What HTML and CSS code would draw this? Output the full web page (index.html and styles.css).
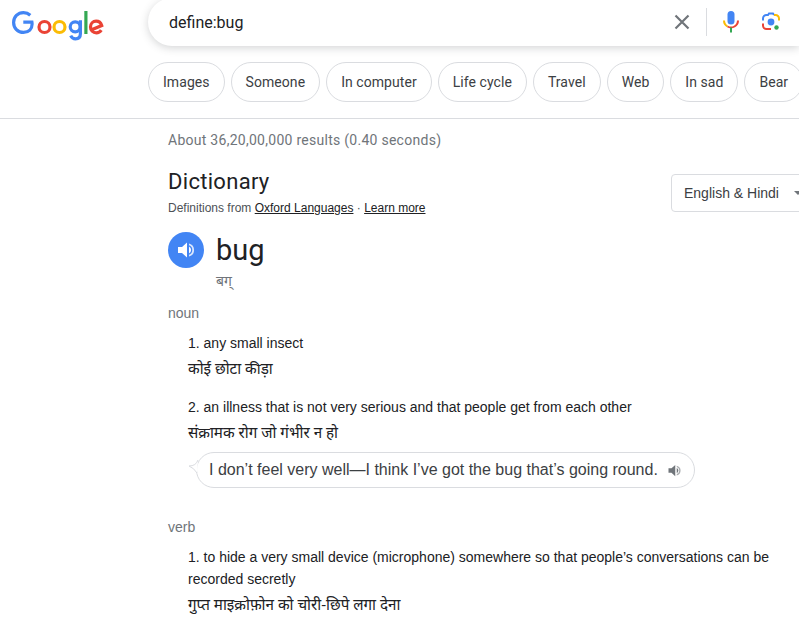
FILE: index.html
```html
<!DOCTYPE html>
<html lang="en">
<head>
<meta charset="utf-8">
<title>define:bug - Google Search</title>
<link rel="stylesheet" href="styles.css">
</head>
<body>
<header class="top">
  <div class="search-row">
    <svg class="logo" viewBox="0 0 92 30" width="92" height="30" role="img" aria-label="Google" fill="none" stroke-width="3.200">
      <path d="M18.300 5.300A10.300 10.300 0 0 0 11.500 2.600C5.800 2.600 1.600 7 1.600 12.500S5.800 22.400 11.500 22.400C16.800 22.400 20.100 18.900 20.100 14 20.100 13.300 20 12.700 19.900 12.100H11.300" stroke="#4285f4"/>
      <circle cx="32.500" cy="17" r="5.500" stroke="#ea4335"/>
      <circle cx="47.500" cy="17" r="5.500" stroke="#fbbc05"/>
      <circle cx="63.200" cy="16.800" r="5" stroke="#4285f4"/>
      <path d="M68.400 10.200v13.600c0 3.400-2.100 5-4.900 5-2.300 0-4-1.400-4.800-3.200" stroke="#4285f4"/>
      <path d="M73.900 1v23" stroke="#34a853"/>
      <path d="M78.500 20.300 89.700 15.500C88.900 13 87 11.200 84.100 11.200c-3.100 0-5.600 2.500-5.600 5.800 0 3.500 2.500 5.800 5.800 5.800 2.400 0 4-1.200 5-2.700" stroke="#ea4335"/>
    </svg>
    <div class="search-box">
      <span class="query">define:bug</span>
      <div class="search-icons">
        <svg class="clear" viewBox="0 0 16 16" width="16" height="16" fill="none" stroke="#70757a" stroke-width="2.200"><path d="M1.500 1.500l13 13M14.500 1.500l-13 13"/></svg>
        <span class="sep"></span>
        <svg class="mic" viewBox="0 0 16 24" width="16" height="24" fill="none">
          <rect x="4.500" y="1" width="7" height="13.500" rx="3.500" fill="#4285f4"/>
          <path d="M1 10.500a7 7 0 0 0 3.500 6" stroke="#fbbc05" stroke-width="2"/>
          <path d="M4.500 16.500a7 7 0 0 0 7 0 7 7 0 0 0 3.500-6" stroke="#ea4335" stroke-width="2"/>
          <path d="M8 17.500v5" stroke="#34a853" stroke-width="2"/>
        </svg>
        <svg class="lens" viewBox="0 0 20 20" width="20" height="20" fill="none" stroke-width="2">
          <path d="M2 8.500v-2A3.500 3.500 0 0 1 5.500 3H7l1-1.500h4L13 3" stroke="#4285f4"/>
          <path d="M13 3h1.500A3.500 3.500 0 0 1 18 6.500v2" stroke="#fbbc05"/>
          <path d="M2 11.500v2A3.500 3.500 0 0 0 5.500 17H10" stroke="#ea4335"/>
          <circle cx="10" cy="10" r="3.400" fill="#4285f4" stroke="none"/>
          <circle cx="15.500" cy="15.500" r="2.200" fill="#34a853" stroke="none"/>
        </svg>
      </div>
    </div>
  </div>
  <nav class="chips">
    <a class="chip">Images</a>
    <a class="chip">Someone</a>
    <a class="chip">In computer</a>
    <a class="chip">Life cycle</a>
    <a class="chip">Travel</a>
    <a class="chip">Web</a>
    <a class="chip">In sad</a>
    <a class="chip">Bear</a>
  </nav>
</header>
<main class="results">
  <p class="stats">About 36,20,00,000 results (0.40 seconds)</p>
  <section class="dict">
    <div class="dict-head">
      <div class="dict-title">
        <h2>Dictionary</h2>
        <p class="source">Definitions from <a>Oxford Languages</a> · <a>Learn more</a></p>
      </div>
      <div class="lang"><span>English &amp; Hindi</span><span class="caret"></span></div>
    </div>
    <div class="word-row">
      <button class="speak" aria-label="Listen">
        <svg viewBox="0 0 20 20" width="20" height="20"><path d="M2 7v6h4l5 4.500V2.500L6 7z" fill="#fff"/><path d="M13 6.500a4 4 0 0 1 0 7z" fill="#fff"/><path d="M13 3.500v1.800a5 5 0 0 1 0 9.400v1.800a6.700 6.700 0 0 0 0-13z" fill="#fff" opacity=".8"/></svg>
      </button>
      <div class="word">
        <h3>bug</h3>
        <p class="phon">बग्</p>
      </div>
    </div>
    <h4 class="pos">noun</h4>
    <ol class="defs">
      <li class="def">
        <p class="en">1. any small insect</p>
        <p class="hi">कोई छोटा कीड़ा</p>
      </li>
      <li class="def">
        <p class="en">2. an illness that is not very serious and that people get from each other</p>
        <p class="hi">संक्रामक रोग जो गंभीर न हो</p>
        <div class="example">
          <svg class="tail" viewBox="0 0 10 16" width="10" height="16"><path d="M10 1Q8 7 1 7 6 9 9 14" fill="#fff" stroke="#dadce0"/></svg>
          <span class="ex-text">I don’t feel very well—I think I’ve got the bug that’s going round.</span>
          <svg viewBox="0 0 20 20" width="15" height="15"><path d="M2 7v6h4l5 4.500V2.500L6 7z" fill="#70757a"/><path d="M13 6.500a4 4 0 0 1 0 7z" fill="#70757a"/><path d="M13 3.500v1.800a5 5 0 0 1 0 9.400v1.800a6.700 6.700 0 0 0 0-13z" fill="#70757a" opacity=".6"/></svg>
        </div>
      </li>
    </ol>
    <h4 class="pos verb">verb</h4>
    <ol class="defs">
      <li class="def">
        <p class="en">1. to hide a very small device (microphone) somewhere so that people’s conversations can be recorded secretly</p>
        <p class="hi">गुप्त माइक्रोफ़ोन को चोरी-छिपे लगा देना</p>
      </li>
    </ol>
  </section>
</main>
</body>
</html>
```
FILE: styles.css
```css
* { box-sizing: border-box; }
html, body { margin: 0; padding: 0; height: 623px; overflow: hidden; background: #fff; }
body { width: 799px; font-family: "Liberation Sans", Arial, sans-serif; color: #202124; }
h2, h3, h4, p, ol { margin: 0; padding: 0; font-weight: 400; }
ol { list-style: none; }

.top { width: 799px; height: 119px; border-bottom: 1px solid #dadce0; overflow: hidden; }
.search-row { display: flex; align-items: flex-start; height: 62px; }
.logo { margin: 10px 0 0 12px; flex: none; overflow: visible; }
.search-box {
  flex: none; display: flex; align-items: center; justify-content: space-between;
  width: 651px; height: 48px; margin: -2px 0 0 44px; padding: 0 18px 0 21px;
  border-radius: 24px 0 0 24px; background: #fff;
  box-shadow: 0 2px 8px rgba(60, 64, 67, .22);
}
.query { font: 16px Roboto, sans-serif; }
.search-icons { display: flex; align-items: center; }
.clear { margin-right: 16px; }
.sep { width: 1px; height: 28px; background: #dadce0; margin-right: 16px; }
.mic { margin-right: 22px; }

.chips { display: flex; gap: 6px; margin-left: 148px; }
.chip {
  flex: none; height: 40px; padding: 0 14px; border: 1px solid #dadce0; border-radius: 20px;
  display: flex; align-items: center; font: 14px Roboto, sans-serif; letter-spacing: .06px; color: #3c4043;
}

.results { margin-left: 168px; width: 631px; }
.stats { margin-top: 12px; font: 14px/18px Roboto, sans-serif; letter-spacing: .27px; color: #70757a; }
.dict { margin-top: 18px; }
.dict-head { display: flex; justify-content: space-between; align-items: flex-start; width: 643px; }
.dict-title h2 { font: 22px/30px Roboto, sans-serif; letter-spacing: .3px; }
.source { margin-top: 3px; font-size: 12px; line-height: 16px; color: #4d5156; }
.source a { color: #202124; text-decoration: underline; }
.lang {
  flex: none; width: 140px; height: 38px; margin-top: 7px; padding: 0 12px; border: 1px solid #dadce0; border-radius: 4px;
  display: flex; align-items: center; gap: 15px; font-size: 14px; color: #3c4043; white-space: nowrap;
}
.caret { width: 0; height: 0; border: 4px solid transparent; border-top-color: #70757a; border-bottom: 0; }

.word-row { display: flex; gap: 12px; margin-top: 16px; }
.speak {
  flex: none; width: 36px; height: 36px; padding: 0; border: 0; border-radius: 50%; background: #4285f4;
  display: flex; align-items: center; justify-content: center;
}
.word h3 { font: 29px/36px Roboto, sans-serif; }
.phon { margin-top: 3px; font: 14px/20px "Noto Sans", sans-serif; color: #70757a; }

.pos { margin-top: 12px; font-size: 14px; line-height: 20px; color: #70757a; }
.pos.verb { margin-top: 29px; }
.defs { margin-left: 20px; }
.def { margin-top: 9px; }
.def + .def { margin-top: 18px; }
.en { font-size: 14px; line-height: 22px; color: #202124; }
.hi { margin-top: 4px; font: 15.200px/20px "Noto Sans", sans-serif; color: #202124; }

.example {
  position: relative; display: flex; align-items: center; gap: 9px;
  width: 499px; height: 36px; margin: 10px 0 0 8px; padding: 0 12px;
  border: 1px solid #dadce0; border-radius: 18px; font-size: 16px; color: #3c4043;
}
.ex-text { white-space: nowrap; }
.tail { position: absolute; left: -9px; top: 6px; overflow: visible; }
```
